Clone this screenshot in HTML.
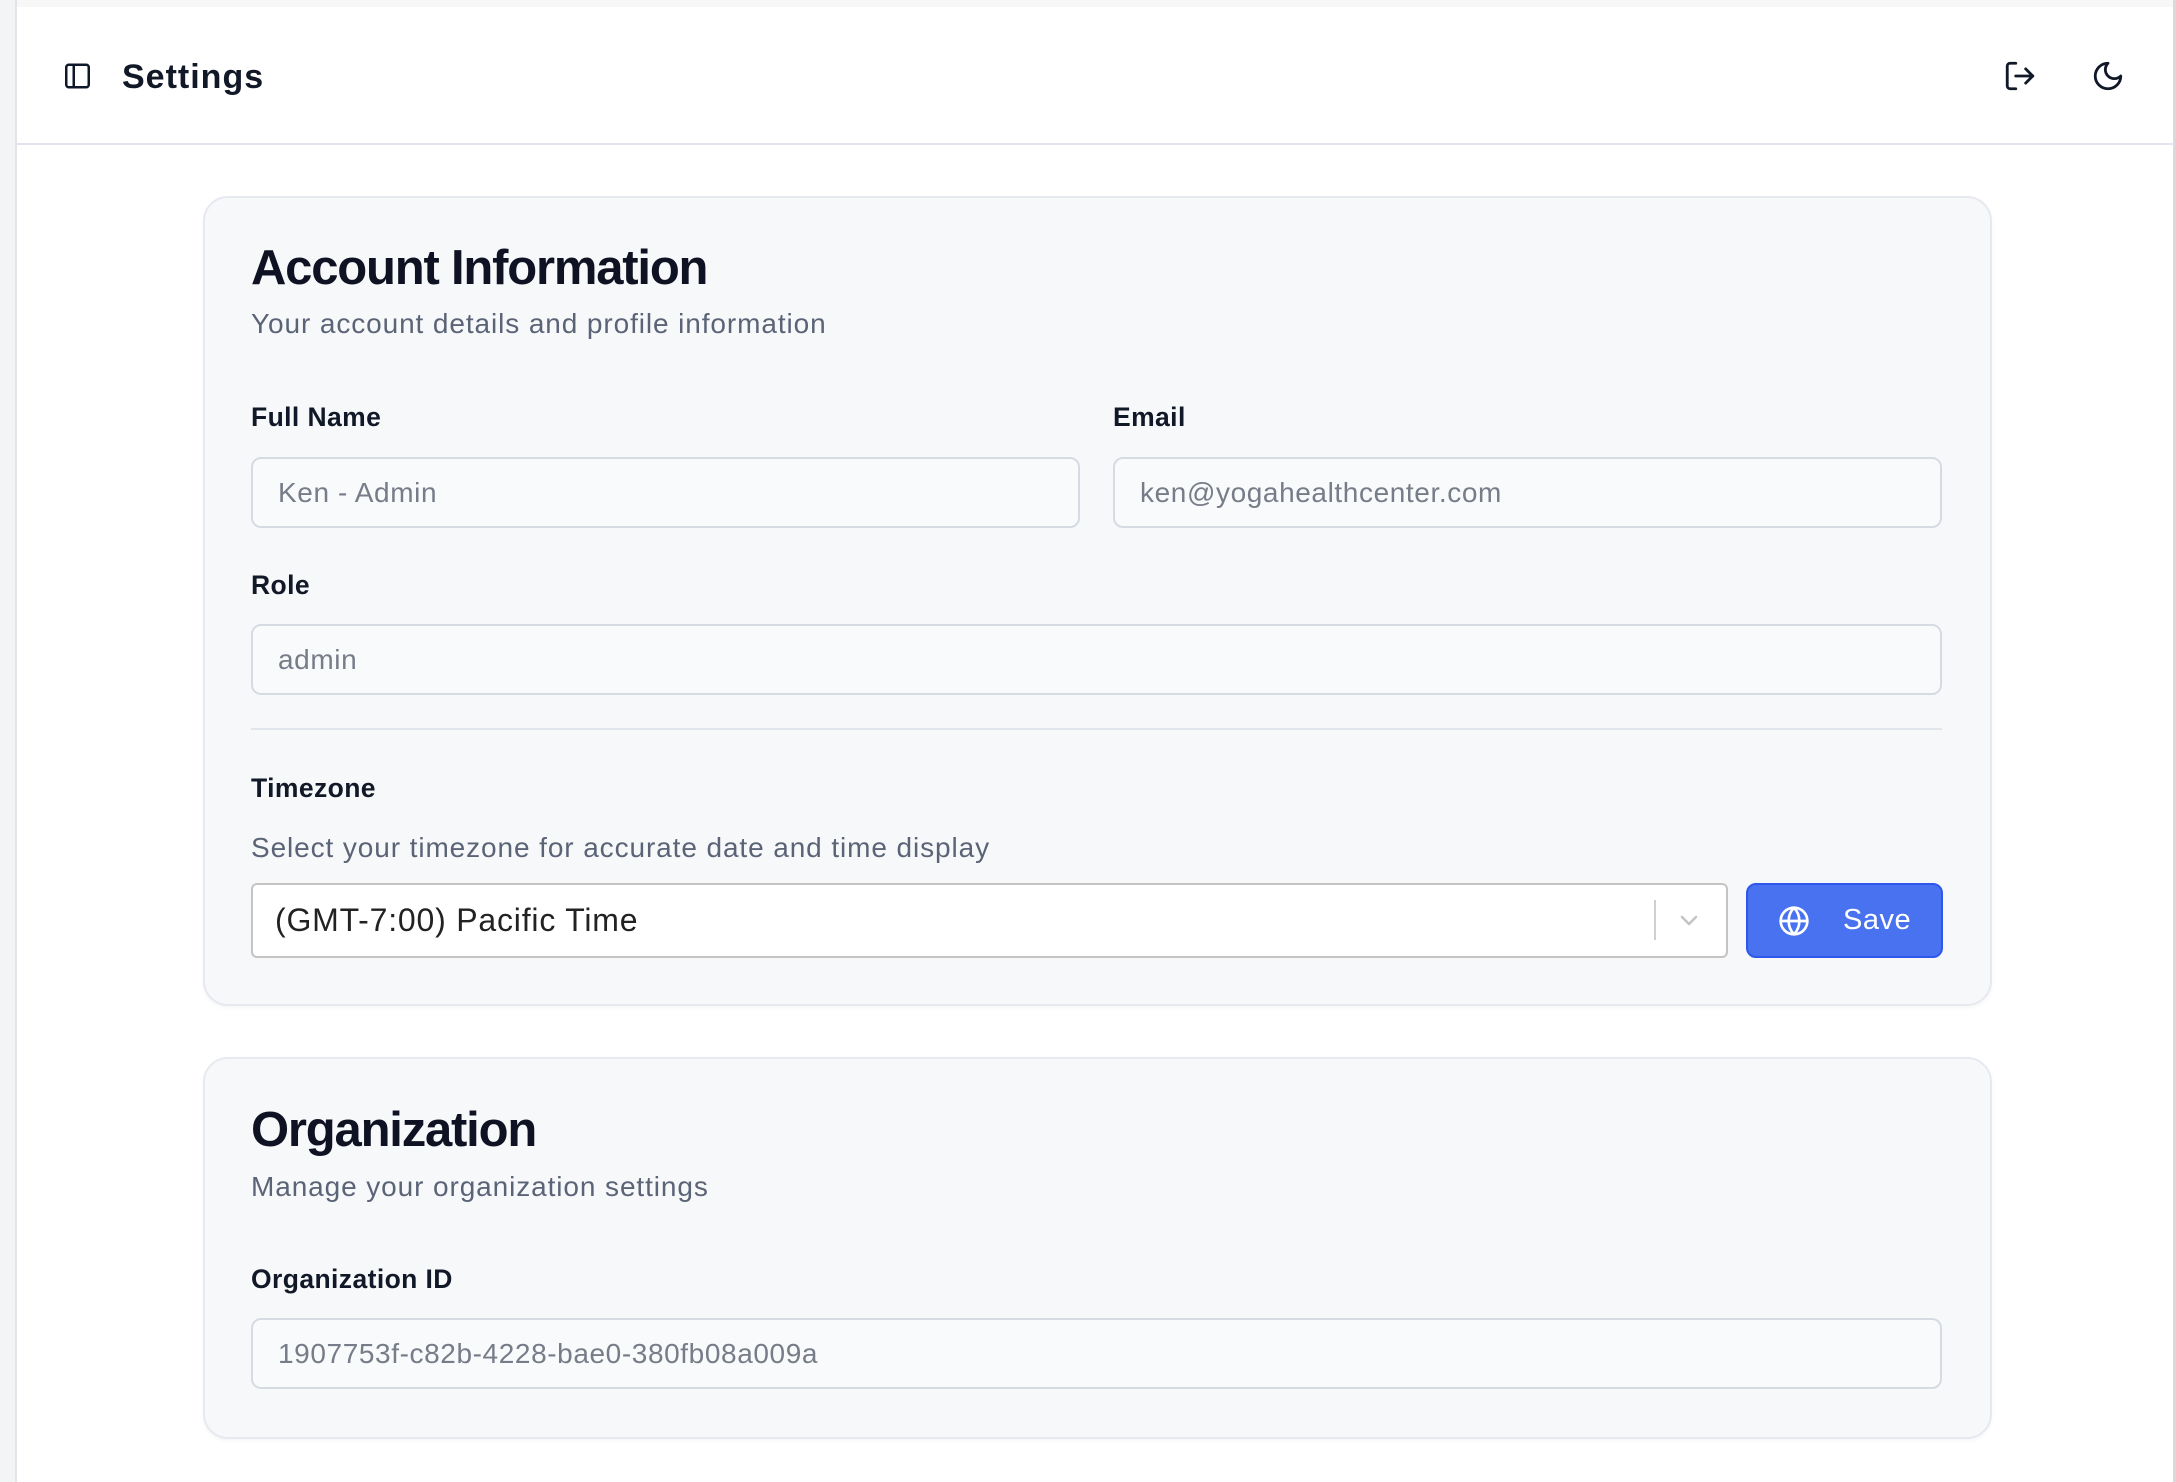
<!DOCTYPE html>
<html><head><meta charset="utf-8"><style>
*{box-sizing:border-box;margin:0;padding:0}
body{width:2176px;height:1482px;background:#fff;font-family:"Liberation Sans",Arial,sans-serif;position:relative;overflow:hidden;color:#0f172a}
.a{position:absolute;white-space:nowrap}
.card{position:absolute;left:203px;width:1789px;background:#f7f8fa;border:2px solid #e6e9ef;border-radius:25px;box-shadow:0 2px 4px rgba(0,0,0,0.04)}
.h{font-size:49px;font-weight:700;letter-spacing:-1.2px;color:#0f1222}
.sub{font-size:28px;color:#5b6477;letter-spacing:0.9px}
.lbl{font-size:26.5px;font-weight:600;color:#111827;letter-spacing:0.4px}
.inp{position:absolute;height:71px;border:2px solid #d6dbe3;border-radius:10px;background:#f9fafb;font-size:28px;color:#767c88;padding-left:25px;line-height:67px;letter-spacing:0.6px}
</style></head><body>
<div class="a" style="left:0;top:0;width:2176px;height:7px;background:#f7f7f8"></div>
<div class="a" style="left:0;top:0;width:17px;height:1482px;background:#f3f4f6;border-right:2px solid #e2e4e9"></div>
<div class="a" style="left:2173px;top:0;width:3px;height:1482px;background:#d8d9dc"></div>
<div class="a" style="left:17px;top:143px;width:2157px;height:2px;background:#e1e3ee"></div>
<svg class="a" style="left:62px;top:61px" width="31" height="30" viewBox="0 0 24 24" fill="none" stroke="#0f172a" stroke-width="2" stroke-linecap="round" stroke-linejoin="round"><rect x="3" y="3" width="18" height="18" rx="2"/><path d="M9 3v18"/></svg>
<div class="a" style="left:122px;top:58px;font-size:34px;font-weight:700;color:#111827;letter-spacing:1px">Settings</div>
<svg class="a" style="left:2003px;top:59px" width="34" height="34" viewBox="0 0 24 24" fill="none" stroke="#111827" stroke-width="2" stroke-linecap="round" stroke-linejoin="round"><path d="M9 21H5a2 2 0 0 1-2-2V5a2 2 0 0 1 2-2h4"/><path d="M16 17l5-5-5-5"/><path d="M21 12H9"/></svg>
<svg class="a" style="left:2091px;top:59px" width="34" height="34" viewBox="0 0 24 24" fill="none" stroke="#111827" stroke-width="2" stroke-linecap="round" stroke-linejoin="round"><path d="M12 3a6 6 0 0 0 9 9 9 9 0 1 1-9-9z"/></svg>

<div class="card" style="top:196px;height:810px"></div>
<div class="a h" style="left:251px;top:240px">Account Information</div>
<div class="a sub" style="left:251px;top:308px">Your account details and profile information</div>
<div class="a lbl" style="left:251px;top:402px">Full Name</div>
<div class="a lbl" style="left:1113px;top:402px">Email</div>
<div class="inp" style="left:251px;top:457px;width:829px">Ken - Admin</div>
<div class="inp" style="left:1113px;top:457px;width:829px">ken@yogahealthcenter.com</div>
<div class="a lbl" style="left:251px;top:570px">Role</div>
<div class="inp" style="left:251px;top:624px;width:1691px">admin</div>
<div class="a" style="left:251px;top:728px;width:1691px;height:2px;background:#e1e5ec"></div>
<div class="a lbl" style="left:251px;top:773px">Timezone</div>
<div class="a sub" style="left:251px;top:832px">Select your timezone for accurate date and time display</div>
<div class="a" style="left:251px;top:883px;width:1477px;height:75px;background:#fff;border:2px solid #c4c4c4;border-radius:6px;font-size:32px;color:#222;padding-left:22px;line-height:71px;letter-spacing:0.8px">(GMT-7:00) Pacific Time</div>
<div class="a" style="left:1654px;top:900px;width:2px;height:40px;background:#d0d0d0"></div>
<svg class="a" style="left:1676px;top:908px" width="26" height="24" viewBox="0 0 24 24" fill="none" stroke="#c4c4c4" stroke-width="2.5" stroke-linecap="round" stroke-linejoin="round"><path d="M5 9l7 7 7-7"/></svg>
<div class="a" style="left:1746px;top:883px;width:197px;height:75px;background:#4872f0;border:2px solid #2e58ec;border-radius:10px"></div>
<svg class="a" style="left:1778px;top:905px" width="32" height="32" viewBox="0 0 24 24" fill="none" stroke="#fff" stroke-width="2" stroke-linecap="round" stroke-linejoin="round"><circle cx="12" cy="12" r="10"/><path d="M12 2a14.5 14.5 0 0 0 0 20 14.5 14.5 0 0 0 0-20"/><path d="M2 12h20"/></svg>
<div class="a" style="left:1843px;top:904px;font-size:29px;color:#fff;font-weight:500;letter-spacing:0.5px">Save</div>

<div class="card" style="top:1057px;height:382px"></div>
<div class="a h" style="left:251px;top:1102px">Organization</div>
<div class="a sub" style="left:251px;top:1171px">Manage your organization settings</div>
<div class="a lbl" style="left:251px;top:1264px">Organization ID</div>
<div class="inp" style="left:251px;top:1318px;width:1691px">1907753f-c82b-4228-bae0-380fb08a009a</div>
</body></html>
